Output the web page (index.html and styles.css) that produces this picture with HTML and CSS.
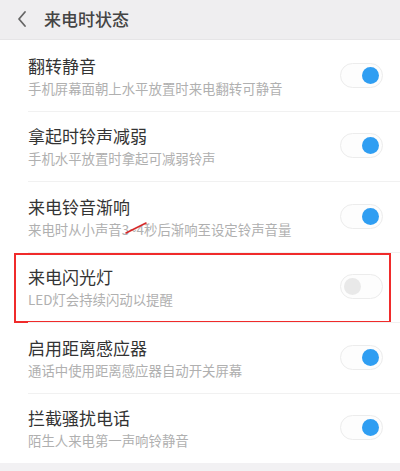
FILE: index.html
```html
<!DOCTYPE html>
<html lang="zh">
<head>
<meta charset="utf-8">
<link rel="stylesheet" href="styles.css">
</head>
<body>
<div class="page">
  <header class="topbar">
    <svg class="back" width="12" height="18" viewBox="0 0 12 18"><path d="M9 2 L3 9 L9 16" fill="none" stroke="#666" stroke-width="1.8" stroke-linecap="round" stroke-linejoin="round"/></svg>
    <span class="top-title">来电时状态</span>
  </header>
  <ul class="list">
    <li class="row">
      <div class="text"><div class="title">翻转静音</div><div class="sub">手机屏幕面朝上水平放置时来电翻转可静音</div></div>
      <span class="switch on"><span class="knob"></span></span>
    </li>
    <li class="row">
      <div class="text"><div class="title">拿起时铃声减弱</div><div class="sub">手机水平放置时拿起可减弱铃声</div></div>
      <span class="switch on"><span class="knob"></span></span>
    </li>
    <li class="row">
      <div class="text"><div class="title">来电铃音渐响</div><div class="sub">来电时从小声音<span class="mark">3~4<svg class="slash" width="26" height="14" viewBox="0 0 26 14"><path d="M2 12 L22 2" stroke="#d62a2a" stroke-width="1.6" stroke-linecap="round"/></svg></span>秒后渐响至设定铃声音量</div></div>
      <span class="switch on"><span class="knob"></span></span>
    </li>
    <li class="row highlight">
      <div class="text"><div class="title">来电闪光灯</div><div class="sub">LED灯会持续闪动以提醒</div></div>
      <span class="switch off"><span class="knob"></span></span>
    </li>
    <li class="row">
      <div class="text"><div class="title">启用距离感应器</div><div class="sub">通话中使用距离感应器自动开关屏幕</div></div>
      <span class="switch on"><span class="knob"></span></span>
    </li>
    <li class="row">
      <div class="text"><div class="title">拦截骚扰电话</div><div class="sub">陌生人来电第一声响铃静音</div></div>
      <span class="switch on"><span class="knob"></span></span>
    </li>
  </ul>
</div>
</body>
</html>
```
FILE: styles.css
```css
* { box-sizing: border-box; }
html, body { margin: 0; padding: 0; }
body {
  background: #f2f1f3;
  font-family: "Noto Sans CJK SC", "Noto Sans", sans-serif;
  width: 400px;
  height: 471px;
  overflow: hidden;
}
.topbar {
  height: 40px;
  background: #efeef0;
  border-bottom: 1px solid #e6e5e7;
  display: flex;
  align-items: center;
  padding-left: 16px;
}
.back { margin-right: 16px; margin-top: -2px; }
.top-title {
  font-size: 17px;
  font-weight: 500;
  color: #444;
  margin-top: -3px;
}
.list {
  list-style: none;
  margin: 0;
  padding: 0;
  background: #fff;
}
.row {
  position: relative;
  height: 70.5px;
  display: flex;
  align-items: center;
  padding: 0 17px 0 28px;
}
.row + .row::before {
  content: "";
  position: absolute;
  top: 0;
  left: 28px;
  right: 0;
  height: 1px;
  background: #f1f1f1;
}
.text { flex: 1; padding-top: 1px; }
.title {
  font-size: 17px;
  line-height: 22px;
  color: #333;
}
.sub {
  font-size: 13.4px;
  line-height: 18px;
  color: #b0b0b0;
  margin-top: 2px;
}
.mark { position: relative; }
.slash {
  position: absolute;
  left: 2px;
  top: 2px;
}
.switch {
  width: 43px;
  height: 25px;
  border-radius: 13px;
  border: 1px solid #ececec;
  background: #fdfdfd;
  display: flex;
  align-items: center;
  padding: 0 3px;
}
.switch .knob {
  width: 17px;
  height: 17px;
  border-radius: 50%;
}
.switch.on { justify-content: flex-end; }
.switch.on .knob { background: #2f9ef2; }
.switch.off .knob { background: #e9e9e9; }
.highlight::after {
  content: "";
  position: absolute;
  left: 14px;
  right: 9px;
  top: 1px;
  bottom: -1px;
  border: 2px solid #f02b2b;
  pointer-events: none;
}
```
